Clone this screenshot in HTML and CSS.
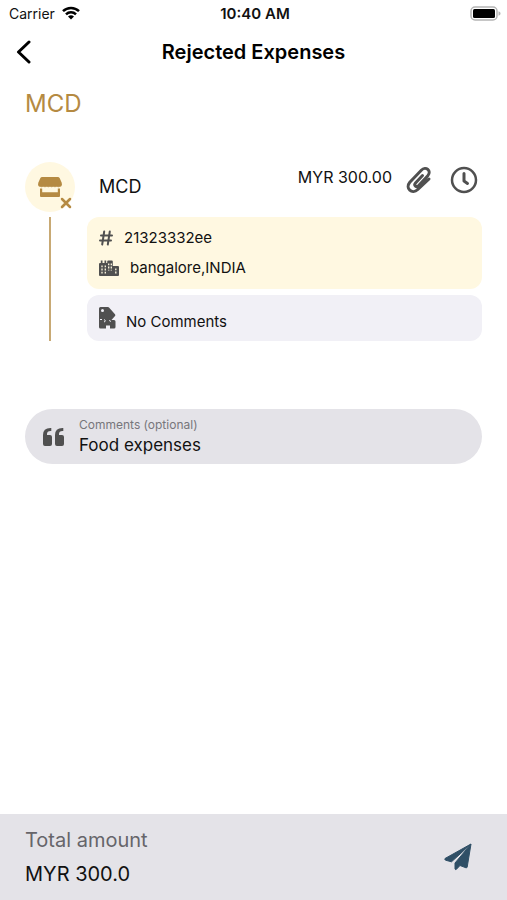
FILE: index.html
```
<!DOCTYPE html>
<html lang="en">
<head>
  <meta charset="UTF-8">
  <meta name="viewport" content="width=device-width, initial-scale=1">
  <title>Rejected Expenses</title>
  <link rel="stylesheet" href="styles.css">
</head>
<body>

  <div class="status-bar">
    <div class="carrier">
      <span>Carrier</span>
      <svg width="18" height="14" viewBox="0 0 18 14" fill="none" stroke="#000" stroke-width="2.5">
        <path d="M1 5.2a11.4 11.4 0 0 1 16 0M4 8.3a7.1 7.1 0 0 1 10 0"/>
        <path d="M9 13.6L6 10.6a4.3 4.3 0 0 1 6 0z" fill="#000" stroke="none"/>
      </svg>
    </div>
    <div class="clock">10:40 AM</div>
    <div class="battery">
      <svg width="31" height="15" viewBox="0 0 31 15">
        <rect x="1" y="1" width="26" height="13" rx="4" fill="#fff" stroke="#b4b4b4" stroke-width="1.5"/>
        <rect x="3" y="3" width="22" height="9" rx="1.5" fill="#000"/>
        <path d="M28.5 5.3c1.500.5 2 1.300 2 2.200s-.5 1.700-2 2.200z" fill="#b4b4b4"/>
      </svg>
    </div>
  </div>

  <header class="nav-bar">
    <button class="icon-btn back" type="button" aria-label="Back">
      <svg width="16" height="24" viewBox="0 0 16 24" fill="none" stroke="#000" stroke-width="3" stroke-linecap="round" stroke-linejoin="round">
        <path d="M13 2L2.5 12 13 22"/>
      </svg>
    </button>
    <h1>Rejected Expenses</h1>
  </header>

  <main class="content">
    <h2 class="merchant">MCD</h2>

    <section class="expense">
      <div class="timeline">
        <div class="avatar">
          <svg width="24" height="22" viewBox="0 0 24 22" fill="#b58a42">
            <path d="M4 1h16q1 0 1.600 1l2 4.500q1 3.500-1.200 4.300H1.600Q-.6 10 .4 6.500L2.400 2Q3 1 4 1z"/>
            <path d="M2 10.500q1.500 1.600 3.300 0 1.700 1.600 3.400 0 1.600 1.600 3.300 0 1.700 1.600 3.300 0 1.700 1.600 3.400 0 1.800 1.600 3.300 0z"/>
            <path d="M2 12.500h2.200v3.700h15.600v-3.700H22V20q0 1-1 1H3q-1 0-1-1z"/>
          </svg>
          <svg class="badge" width="12" height="12" viewBox="0 0 12 12" stroke="#b58a42" stroke-width="2.5" stroke-linecap="round">
            <path d="M2 2l8 8M10 2l-8 8"/>
          </svg>
        </div>
        <div class="line"></div>
      </div>

      <div class="details">
        <div class="summary">
          <span class="name">MCD</span>
          <span class="amount">MYR 300.00</span>
          <button class="icon-btn" type="button" aria-label="Attachments">
            <svg width="26" height="28" viewBox="0 0 26 28" fill="none" stroke="#505050" stroke-width="3" stroke-linecap="round" stroke-linejoin="round">
              <path d="M16.500 9.500L9.500 17c-2 2.300.9 5 3 2.800L21.800 9.800c4.200-5-2-10.200-6.500-5.600L3.800 16.300C-1.200 22.300 6 29 11.800 23.500L23 13"/>
            </svg>
          </button>
          <button class="icon-btn" type="button" aria-label="History">
            <svg width="28" height="28" viewBox="0 0 28 28" fill="none" stroke="#505050" stroke-width="2.5">
              <circle cx="14" cy="14" r="12"/>
              <path d="M14 7.500v7.500l3.500 2.500" stroke-width="3" stroke-linecap="round" stroke-linejoin="round"/>
            </svg>
          </button>
        </div>

        <div class="card info">
          <div class="row">
            <svg width="14" height="16" viewBox="0 0 14 16" stroke="#505050" stroke-width="2" stroke-linecap="round">
              <path d="M5.200 1.500l-2 13M10.800 1.500l-2 13M2 5.500h11M1 10.500h11"/>
            </svg>
            <span>21323332ee</span>
          </div>
          <div class="row">
            <svg width="20" height="16" viewBox="0 0 20 16">
              <path d="M0 4q0-1 1-1h.8V.5h1.700V3h2V.5h1.700V3h1V1.500Q8.200.5 9.200.5h3.600q1 0 1 1V6H19q1 0 1 1v8q0 1-1 1H1q-1 0-1-1z" fill="#505050"/>
              <path d="M3 5.500v8M6.300 5.500v8M9.700 3.500v7M12.300 3.500v7M16.800 8.500v5" fill="none" stroke="#fff8e1" stroke-width="1.300" stroke-dasharray="1.800 1.300"/>
            </svg>
            <span>bangalore,INDIA</span>
          </div>
        </div>

        <div class="card note">
          <svg width="17" height="22" viewBox="0 0 17 22">
            <path d="M1.500 0H9q.6 0 1 .5l6 6.700q.8 1 0 1.900L12.500 13H15q1.500 0 1.500 1.500V20q0 1.500-1.500 1.500h-4V18.500H7v3H1.500Q0 21.500 0 20V1.500Q0 0 1.500 0z" fill="#505050"/>
            <path d="M1 12.500h2M5 12.500l1.500 1.300L5 15.200M10.500 13l1 1.800" fill="none" stroke="#f1f0f6"/>
            <circle cx="3.500" cy="3.500" r="1.500" fill="#f1f0f6"/>
          </svg>
          <span>No Comments</span>
        </div>
      </div>
    </section>

    <div class="comment-box">
      <svg width="21" height="18" viewBox="0 0 21 18" fill="#505050">
        <path id="quote" d="M7.500 0h.8v3H7.500Q4 3 4 6v1h3q2 0 2 2v7q0 2-2 2H2q-2 0-2-2V7q0-7 7.500-7z"/>
        <use href="#quote" x="12"/>
      </svg>
      <div class="field">
        <label for="comment">Comments (optional)</label>
        <input id="comment" type="text" value="Food expenses">
      </div>
    </div>
  </main>

  <footer class="total-bar">
    <div class="total">
      <span class="total-label">Total amount</span>
      <span class="total-value">MYR 300.0</span>
    </div>
    <button class="icon-btn" type="button" aria-label="Send">
      <svg width="28" height="28" viewBox="0 0 28 28" fill="#2f4f66" stroke="#2f4f66" stroke-linejoin="round">
        <path d="M27 1L1 15.500q-.5 1.200.5 1.700l6 1.600zM27 1L11 20v6q.5 1 1.200.5L16 22.500l6 2.300q1 .2 1.200-.8z"/>
      </svg>
    </button>
  </footer>

</body>
</html>
```
FILE: styles.css
```
* {
  box-sizing: border-box;
}
body {
  margin: 0;
  min-height: 100vh;
  display: flex;
  flex-direction: column;
  background: #fff;
  color: #111;
  font-family: Inter, "Liberation Sans", sans-serif;
}
svg {
  display: block;
  flex-shrink: 0;
}
h1, h2 {
  margin: 0;
}
.icon-btn {
  padding: 0;
  border: none;
  background: none;
  cursor: pointer;
}

/* status bar */
.status-bar {
  display: grid;
  grid-template-columns: 1fr auto 1fr;
  align-items: center;
  height: 26px;
  padding: 0 6px 0 9px;
  font-size: 14px;
}
.carrier {
  display: flex;
  align-items: center;
  gap: 7px;
}
.clock {
  font-size: 15px;
  font-weight: 600;
}
.battery {
  justify-self: end;
}

/* nav bar */
.nav-bar {
  display: grid;
  grid-template-columns: 1fr auto 1fr;
  align-items: center;
  height: 52px;
  padding: 0 16px;
}
.nav-bar h1 {
  font-size: 20px;
  font-weight: 600;
  color: #000;
}
.back {
  justify-self: start;
}

.content {
  flex: 1;
  padding: 8px 25px;
}
.merchant {
  font-size: 24px;
  line-height: 36px;
  font-weight: 400;
  color: #b58a42;
}

/* expense entry */
.expense {
  display: flex;
  gap: 12px;
  margin-top: 40px;
}
.timeline {
  display: flex;
  flex-direction: column;
  align-items: center;
  gap: 5px;
}
.avatar {
  position: relative;
  display: flex;
  align-items: center;
  justify-content: center;
  width: 50px;
  height: 50px;
  border-radius: 50%;
  background: #fff8e1;
}
.badge {
  position: absolute;
  right: 3px;
  bottom: 3px;
}
.line {
  flex: 1;
  width: 2px;
  background: #c8a974;
}
.details {
  flex: 1;
}
.summary {
  display: flex;
  align-items: center;
  height: 35px;
  margin-bottom: 20px;
  padding: 0 4px 0 12px;
  gap: 18px;
}
.name {
  flex: 1;
  align-self: flex-end;
  font-size: 18px;
  line-height: 20px;
}
.amount {
  margin-right: -4px;
  padding-bottom: 6px;
  font-size: 16px;
}
.card {
  padding: 11px 12px;
  border-radius: 12px;
  font-size: 15px;
  line-height: 20px;
}
.info {
  display: flex;
  flex-direction: column;
  gap: 10px;
  background: #fff8e1;
}
.row {
  display: flex;
  align-items: center;
  gap: 11px;
}
.note {
  display: flex;
  align-items: flex-start;
  gap: 10px;
  margin-top: 6px;
  padding: 12px 12px 9px;
  background: #f1f0f6;
}
.note span {
  padding-top: 5px;
}

/* comment input */
.comment-box {
  display: flex;
  align-items: center;
  gap: 15px;
  height: 55px;
  margin-top: 68px;
  padding: 0 18px;
  border-radius: 28px;
  background: #e4e3e8;
}
.field {
  flex: 1;
  display: flex;
  flex-direction: column;
}
.field label {
  font-size: 12px;
  line-height: 16px;
  color: #77767b;
}
.field input {
  width: 100%;
  height: 24px;
  padding: 0;
  border: none;
  outline: none;
  background: none;
  color: #111;
  font-family: inherit;
  font-size: 17px;
}

/* footer */
.total-bar {
  display: flex;
  align-items: center;
  justify-content: space-between;
  height: 86px;
  padding: 0 35px 0 25px;
  background: #e4e3e8;
}
.total {
  display: flex;
  flex-direction: column;
  font-size: 20px;
  line-height: 34px;
}
.total-label {
  color: #66656a;
}
```
